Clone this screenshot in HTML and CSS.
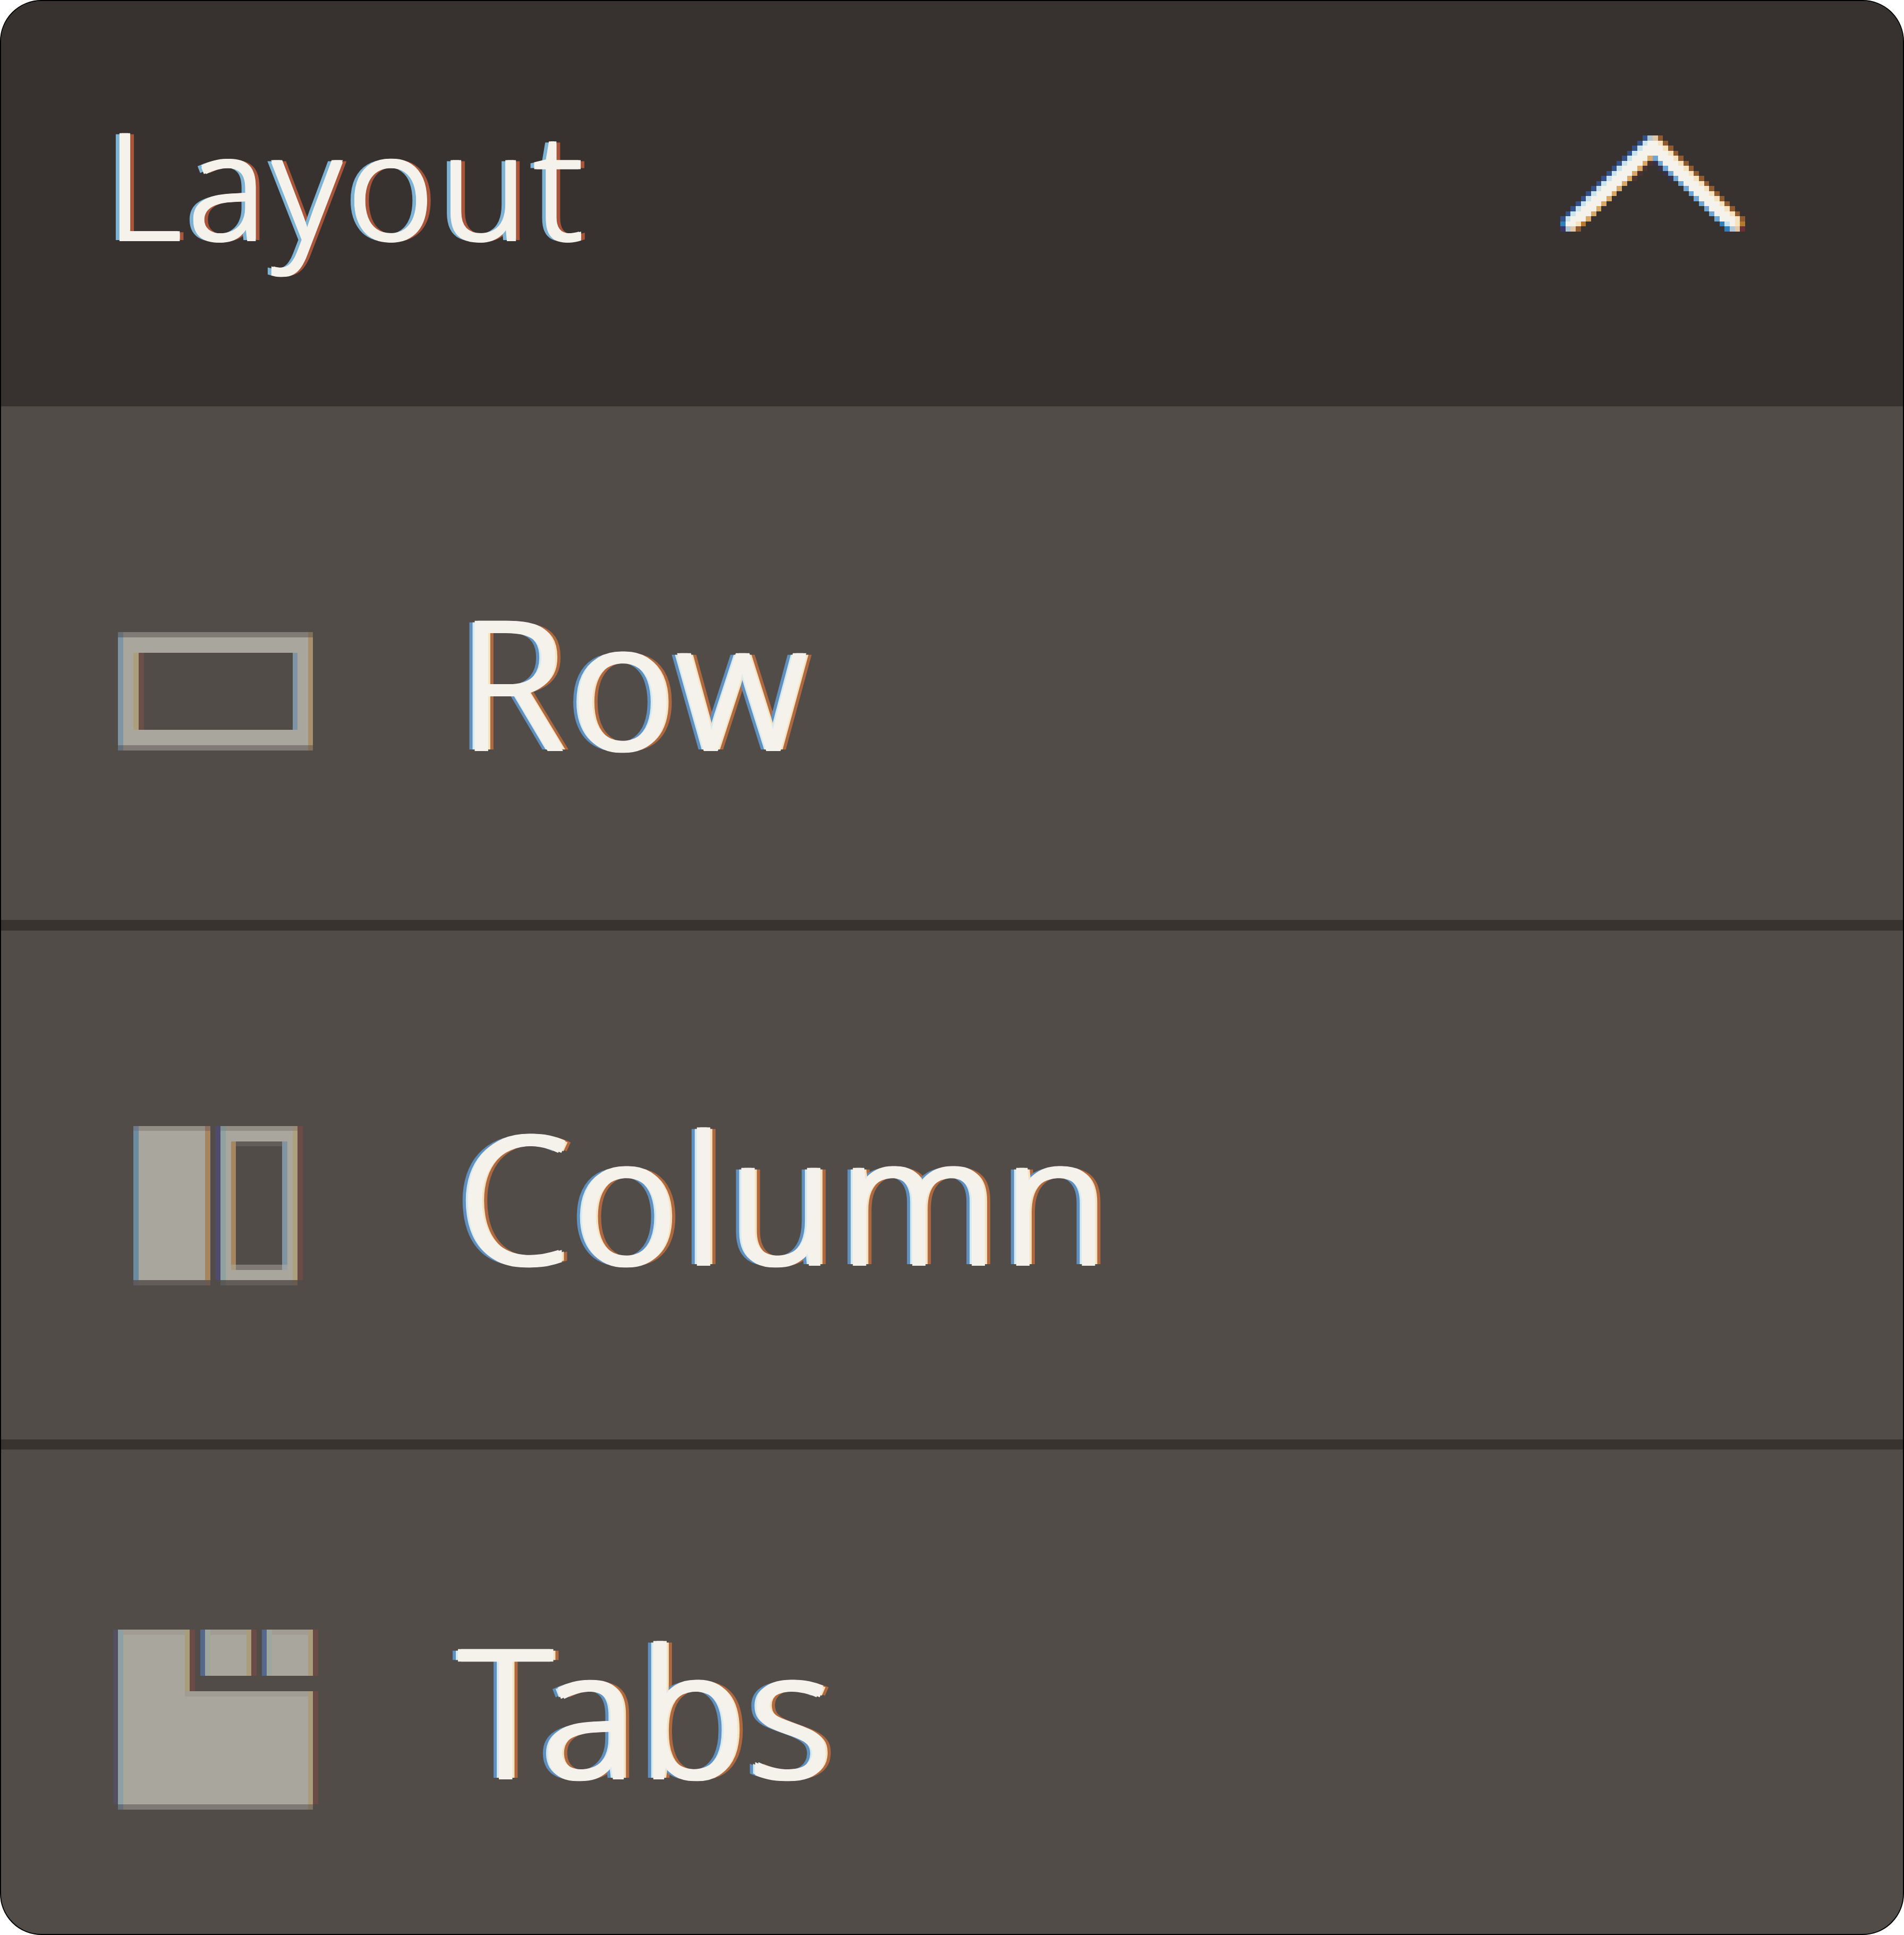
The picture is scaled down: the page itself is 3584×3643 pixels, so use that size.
FILE: index.html
```html
<!DOCTYPE html>
<html lang="en">
<head>
<meta charset="utf-8">
<title>Layout</title>
<link rel="stylesheet" href="styles.css">
</head>
<body>
<section class="panel">
  <header class="panel-header">
    <span class="panel-title">Layout</span>
    <svg class="chevron" viewBox="0 0 36 19" preserveAspectRatio="none" aria-hidden="true">
      <path fill="#34518a" d="M16 0h1v1h-1zm-1 1h1v1h-1zm-1 1h1v1h-1zm-1 1h1v1h-1zm-1 1h1v1h-1zm-1 1h1v1h-1zm-1 1h1v1h-1zm-1 1h1v1h-1zm-1 1h1v1h-1zm-1 1h1v1h-1zm-1 1h1v1h-1zm-1 1h1v1h-1zm-1 1h1v1h-1zm-1 1h1v1h-1zm-1 1h1v1h-1zm-1 1h1v1h-1zm-1 1h1v1h-1z"/>
      <path fill="#c8e4ee" d="M17 0h1v1h-1zm-1 1h1v1h-1zm-1 1h1v1h-1zm-1 1h1v1h-1zm-1 1h1v1h-1zm-1 1h1v1h-1zm-1 1h1v1h-1zm-1 1h1v1h-1zm-1 1h1v1h-1zm-1 1h1v1h-1zm-1 1h1v1h-1zm-1 1h1v1h-1zm-1 1h1v1h-1zm-1 1h1v1h-1zm-1 1h1v1h-1zm-1 1h1v1h-1zm-1 1h1v1h-1z"/>
      <path fill="#f5f1eb" d="M17 1h2v1h-2zM16 2h4v1h-4zM15 3h6v1h-6zM14 4h3v1h-3zM19 4h3v1h-3zM13 5h3v1h-3zm-1 1h3v1h-3zm-1 1h3v1h-3zm-1 1h3v1h-3zm-1 1h3v1h-3zm-1 1h3v1h-3zm-1 1h3v1h-3zm-1 1h3v1h-3zm-1 1h3v1h-3zm-1 1h3v1h-3zm-1 1h3v1h-3zm-1 1h3v1h-3zM20 5h3v1h-3zm1 1h3v1h-3zm1 1h3v1h-3zm1 1h3v1h-3zm1 1h3v1h-3zm1 1h3v1h-3zm1 1h3v1h-3zm1 1h3v1h-3zm1 1h3v1h-3zm1 1h3v1h-3zm1 1h3v1h-3zm1 1h3v1h-3zM1 17h2v1h-2zM33 17h1v1h-1z"/>
      <path fill="#f6e2bd" d="M19 1h1v1h-1zm1 1h1v1h-1zm1 1h1v1h-1zm1 1h1v1h-1zm1 1h1v1h-1zm1 1h1v1h-1zm1 1h1v1h-1zm1 1h1v1h-1zm1 1h1v1h-1zm1 1h1v1h-1zm1 1h1v1h-1zm1 1h1v1h-1zm1 1h1v1h-1zm1 1h1v1h-1zm1 1h1v1h-1zm1 1h1v1h-1zM3 17h1v1h-1zM34 17h1v1h-1z"/>
      <path fill="#8f5a2f" d="M19 0h1v1h-1zm1 1h1v1h-1zm1 1h1v1h-1zm1 1h1v1h-1zm1 1h1v1h-1zm1 1h1v1h-1zm1 1h1v1h-1zm1 1h1v1h-1zm1 1h1v1h-1zm1 1h1v1h-1zm1 1h1v1h-1zm1 1h1v1h-1zm1 1h1v1h-1zm1 1h1v1h-1zm1 1h1v1h-1zm1 1h1v1h-1zm1 1h1v1h-1zM3 18h1v1h-1z"/>
      <path fill="#d9a766" d="M17 4h1v1h-1zm-1 1h1v1h-1zm-1 1h1v1h-1zm-1 1h1v1h-1zm-1 1h1v1h-1zm-1 1h1v1h-1zm-1 1h1v1h-1zm-1 1h1v1h-1zm-1 1h1v1h-1zm-1 1h1v1h-1zm-1 1h1v1h-1zm-1 1h1v1h-1zm-1 1h1v1h-1z"/>
      <path fill="#6ea5d2" d="M18 4h1v1h-1zm1 1h1v1h-1zm1 1h1v1h-1zm1 1h1v1h-1zm1 1h1v1h-1zm1 1h1v1h-1zm1 1h1v1h-1zm1 1h1v1h-1zm1 1h1v1h-1zm1 1h1v1h-1zm1 1h1v1h-1zm1 1h1v1h-1zm1 1h1v1h-1z"/>
      <path fill="#4c3330" d="M17 5h1v1h-1zm-1 1h1v1h-1zm-1 1h1v1h-1zm-1 1h1v1h-1z"/>
      <path fill="#37324c" d="M18 5h1v1h-1zm1 1h1v1h-1zm1 1h1v1h-1zm1 1h1v1h-1z"/>
      <path fill="#b0c8d4" d="M17 0h1v1h-1zM1 18h1v1h-1zM33 18h1v1h-1z"/>
      <path fill="#e0c8a8" d="M18 0h1v1h-1zM2 18h1v1h-1zM34 18h1v1h-1z"/>
      <path fill="#2f80ba" d="M0 17h1v1h-1zM31 17h1v1h-1zM32 18h1v1h-1z"/>
      <path fill="#c8e4ee" d="M32 17h1v1h-1z"/>
      <path fill="#3a3468" d="M0 18h1v1h-1z"/>
      <path fill="#b5792f" d="M4 17h1v1h-1zM35 17h1v1h-1z"/>
      <path fill="#6a3038" d="M35 18h1v1h-1z"/>
    </svg>
  </header>

  <div class="item item-row">
    <svg class="icon" viewBox="0 0 400 340" aria-hidden="true">
      <g transform="translate(12 59)">
        <rect width="367" height="223" fill="#a9a69e"/>
        <rect width="367" height="10" fill="#807b75"/>
        <rect y="213" width="367" height="10" fill="#807b75"/>
        <rect y="10" width="10" height="203" fill="#8095a4"/>
        <rect x="358" y="10" width="9" height="203" fill="#a98f6d"/>
        <rect width="10" height="10" fill="#66707a"/>
        <rect y="213" width="10" height="10" fill="#66707a"/>
        <rect x="358" width="9" height="10" fill="#80705a"/>
        <rect x="358" y="213" width="9" height="10" fill="#80705a"/>
        <rect x="29" y="39" width="309" height="145" fill="#514c47"/>
        <rect x="29" y="39" width="10" height="145" fill="#ac9f7c"/>
        <rect x="39" y="39" width="10" height="145" fill="#6c4e48"/>
        <rect x="329" y="39" width="9" height="145" fill="#7f93a4"/>
      </g>
    </svg>
    <span class="item-label">Row</span>
  </div>
  <div class="divider"></div>

  <div class="item item-column">
    <svg class="icon" viewBox="0 0 400 340" aria-hidden="true">
      <g transform="translate(41 20)">
        <rect x="10" width="125" height="300" fill="#a9a69e"/>
        <rect x="10" width="125" height="9" fill="#928e86"/>
        <rect x="10" y="290" width="125" height="10" fill="#625d58"/>
        <rect y="9" width="10" height="281" fill="#6c8aa2"/>
        <rect x="135" y="9" width="10" height="281" fill="#a5865f"/>
        <rect width="10" height="9" fill="#6f7a8a"/>
        <rect x="135" width="10" height="9" fill="#8c7060"/>
        <rect y="290" width="10" height="10" fill="#5f5a60"/>
        <rect x="135" y="290" width="10" height="10" fill="#6a5a50"/>

        <rect x="174" width="126" height="300" fill="#a9a69e"/>
        <rect x="174" width="126" height="9" fill="#928e86"/>
        <rect x="174" y="290" width="126" height="10" fill="#625d58"/>
        <rect x="155" width="9" height="290" fill="#514a70"/>
        <rect x="164" y="9" width="10" height="281" fill="#90a29f"/>
        <rect x="164" width="10" height="9" fill="#7f928e"/>
        <rect x="164" y="290" width="10" height="10" fill="#5a5a5a"/>
        <rect x="300" y="9" width="9" height="281" fill="#aca07f"/>
        <rect x="300" width="9" height="9" fill="#988c76"/>
        <rect x="300" y="290" width="9" height="10" fill="#6a5a4e"/>
        <rect x="309" width="10" height="290" fill="#6a4b46"/>

        <rect x="193" y="38" width="87" height="223" fill="#514c47"/>
        <rect x="193" y="29" width="87" height="9" fill="#625d58"/>
        <rect x="193" y="261" width="87" height="10" fill="#807b75"/>
        <rect x="184" y="29" width="9" height="232" fill="#a5865f"/>
        <rect x="280" y="29" width="10" height="232" fill="#8094a4"/>
        <rect x="184" y="261" width="9" height="10" fill="#a89a7e"/>
        <rect x="280" y="261" width="10" height="10" fill="#9ca1a6"/>
      </g>
    </svg>
    <span class="item-label">Column</span>
  </div>
  <div class="divider divider-thin"></div>

  <div class="item item-tabs">
    <svg class="icon" viewBox="0 0 400 340" aria-hidden="true">
      <g transform="translate(3 1)">
        <rect x="19" y="116" width="348" height="213" fill="#a9a69e"/>
        <rect x="19" width="116" height="116" fill="#a9a69e"/>
        <rect x="19" width="116" height="10" fill="#a19d95"/>
        <rect x="135" y="116" width="232" height="10" fill="#a19d95"/>
        <rect x="19" y="329" width="348" height="10" fill="#7e7973"/>
        <rect width="9" height="329" fill="#544f60"/>
        <rect x="9" width="10" height="329" fill="#8da1a4"/>
        <rect x="135" width="9" height="116" fill="#aa9d7c"/>
        <rect x="144" width="10" height="116" fill="#6a4b46"/>
        <rect x="367" y="116" width="9" height="213" fill="#aa9d7c"/>
        <rect x="376" y="116" width="10" height="213" fill="#6a4b46"/>
        <rect x="9" y="329" width="10" height="10" fill="#66707a"/>
        <rect x="367" y="329" width="9" height="10" fill="#7f7260"/>

        <rect x="183" width="68" height="87" fill="#a9a69e"/>
        <rect x="183" width="68" height="10" fill="#a19d95"/>
        <rect x="164" width="9" height="87" fill="#53688a"/>
        <rect x="173" width="10" height="87" fill="#9fa69e"/>
        <rect x="251" width="9" height="87" fill="#aa9d7c"/>
        <rect x="260" width="10" height="87" fill="#6a4b46"/>

        <rect x="299" width="68" height="87" fill="#a9a69e"/>
        <rect x="299" width="68" height="10" fill="#a19d95"/>
        <rect x="280" width="9" height="87" fill="#53688a"/>
        <rect x="289" width="10" height="87" fill="#9fa69e"/>
        <rect x="367" width="9" height="87" fill="#aa9d7c"/>
        <rect x="376" width="10" height="87" fill="#6a4b46"/>
      </g>
    </svg>
    <span class="item-label">Tabs</span>
  </div>
</section>
</body>
</html>
```

FILE: styles.css
```css
* {
  box-sizing: border-box;
}

html,
body {
  margin: 0;
  background: #fff;
}

.panel {
  display: flex;
  flex-direction: column;
  width: 3584px;
  height: 3643px;
  overflow: hidden;
  background: #514c47;
  border: 2px solid #000;
  border-radius: 78px;
  font-family: "Noto Sans", "Open Sans", sans-serif;
  font-weight: 300;
  color: #f5f1eb;
}

.panel-header {
  display: flex;
  align-items: center;
  justify-content: space-between;
  height: 763px;
  padding: 0 297px 0 197px;
  background: #37322f;
}

.panel-title {
  margin-bottom: 78px;
  font-size: 279px;
  letter-spacing: 10px;
  line-height: 1;
  text-shadow:
    2px 2px 0 #f5f1eb,
    -2px -2px 0 #f5f1eb,
    2px -2px 0 #f5f1eb,
    -2px 2px 0 #f5f1eb,
    -9px 0 0 #7db4d6,
    9px 0 0 #a8553a;
}

.chevron {
  width: 348px;
  height: 181px;
  margin-bottom: 77px;
  shape-rendering: crispEdges;
}

.item {
  display: flex;
  align-items: center;
  gap: 253px;
  padding-left: 208px;
}

.item-row {
  height: 967px;
  padding-top: 306px;
  padding-bottom: 201px;
  letter-spacing: 9px;
}

.item-column {
  height: 958px;
  padding-top: 288px;
  padding-bottom: 210px;
  letter-spacing: 8px;
}

.item-tabs {
  height: 912px;
  padding-top: 278px;
  padding-bottom: 174px;
  letter-spacing: 5px;
}

.icon {
  flex: none;
  width: 400px;
  height: 340px;
  shape-rendering: crispEdges;
}

.item-label {
  margin-bottom: 39px;
  font-size: 335px;
  line-height: 1;
  text-shadow:
    3px 3px 0 #f5f1eb,
    -3px -3px 0 #f5f1eb,
    3px -3px 0 #f5f1eb,
    -3px 3px 0 #f5f1eb,
    -7px 0 0 #d5ebf0,
    7px 0 0 #f6e2bd,
    -13px 0 0 #5f90bf,
    13px 0 0 #b0683f;
}

.divider {
  flex: none;
  height: 20px;
  background: #38332f;
}

.divider-thin {
  height: 19px;
}
```
